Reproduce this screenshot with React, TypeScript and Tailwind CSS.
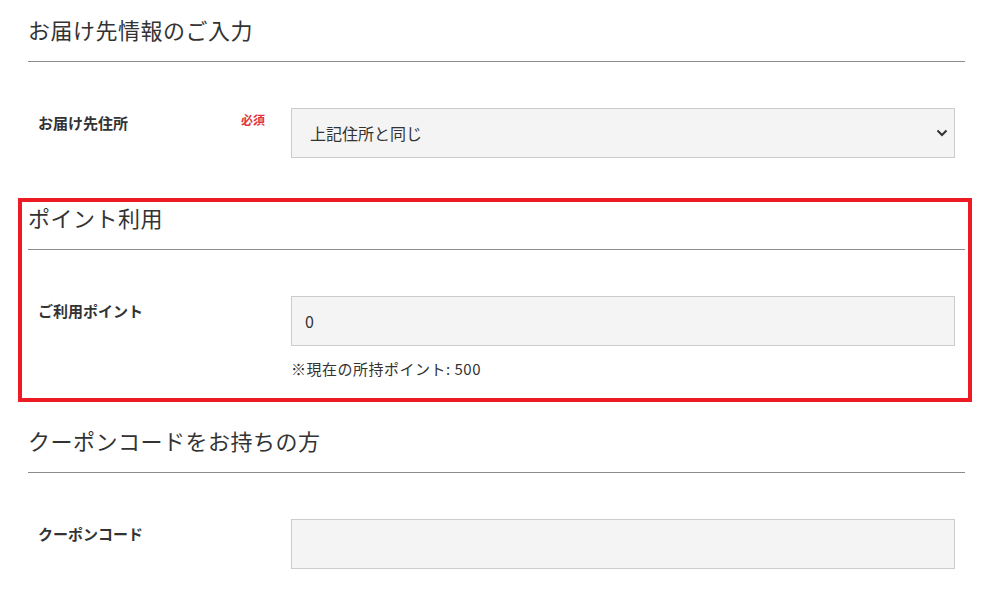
import React from "react";

function Heading({ children }: { children: React.ReactNode }) {
  return (
    <h2 className="text-[22px] leading-[30px] font-normal tracking-[0.5px] text-[#333] pb-[17px] border-b border-[#8c8c8c]">
      {children}
    </h2>
  );
}

function Chevron() {
  return (
    <svg width="12" height="8" viewBox="0 0 12 8" className="block">
      <path d="M1.5 1.5 L6 6 L10.5 1.5" fill="none" stroke="#333" strokeWidth="2" />
    </svg>
  );
}

export default function App() {
  return (
    <div className="w-[1000px] h-[600px] bg-white overflow-hidden text-[#333] font-['Noto_Sans_CJK_JP','Noto_Sans',sans-serif]">
      <div className="pl-[28px] pr-[35px] pt-[14px]">
        {/* Section 1 */}
        <section className="mb-[44px]">
          <Heading>お届け先情報のご入力</Heading>
          <div className="flex items-start px-[10px] mt-[46px]">
            <div className="w-[253px] flex justify-between pr-[26px]">
              <span className="text-[15px] leading-[22px] font-bold pt-[4px]">お届け先住所</span>
              <span className="text-[12px] leading-[18px] font-bold text-[#e0353d] pt-[3px]">必須</span>
            </div>
            <div className="flex-1 h-[50px] border border-[#cccccc] bg-[#f4f4f4] flex items-center justify-between pl-[18px] pr-[6px]">
              <span className="text-[16px] leading-[24px]">上記住所と同じ</span>
              <Chevron />
            </div>
          </div>
        </section>

        {/* Section 2 */}
        <section className="relative mb-[45px]">
          <Heading>ポイント利用</Heading>
          <div className="flex items-start px-[10px] mt-[46px]">
            <div className="w-[253px]">
              <span className="text-[15px] leading-[22px] font-bold pt-[4px] block">ご利用ポイント</span>
            </div>
            <div className="flex-1">
              <div className="h-[50px] border border-[#cccccc] bg-[#f4f4f4] flex items-center pl-[13px]">
                <span className="text-[16px] leading-[24px]">0</span>
              </div>
              <p className="mt-[12px] text-[15px] leading-[22px] tracking-[0.5px]">※現在の所持ポイント: 500</p>
            </div>
          </div>
          <div className="absolute -top-[4px] -bottom-[22px] -left-[10px] -right-[7px] border-[4px] border-[#ed1c24] pointer-events-none" />
        </section>

        {/* Section 3 */}
        <section>
          <Heading>クーポンコードをお持ちの方</Heading>
          <div className="flex items-start px-[10px] mt-[46px]">
            <div className="w-[253px]">
              <span className="text-[15px] leading-[22px] font-bold pt-[4px] block">クーポンコード</span>
            </div>
            <div className="flex-1 h-[50px] border border-[#cccccc] bg-[#f4f4f4]" />
          </div>
        </section>
      </div>
    </div>
  );
}
